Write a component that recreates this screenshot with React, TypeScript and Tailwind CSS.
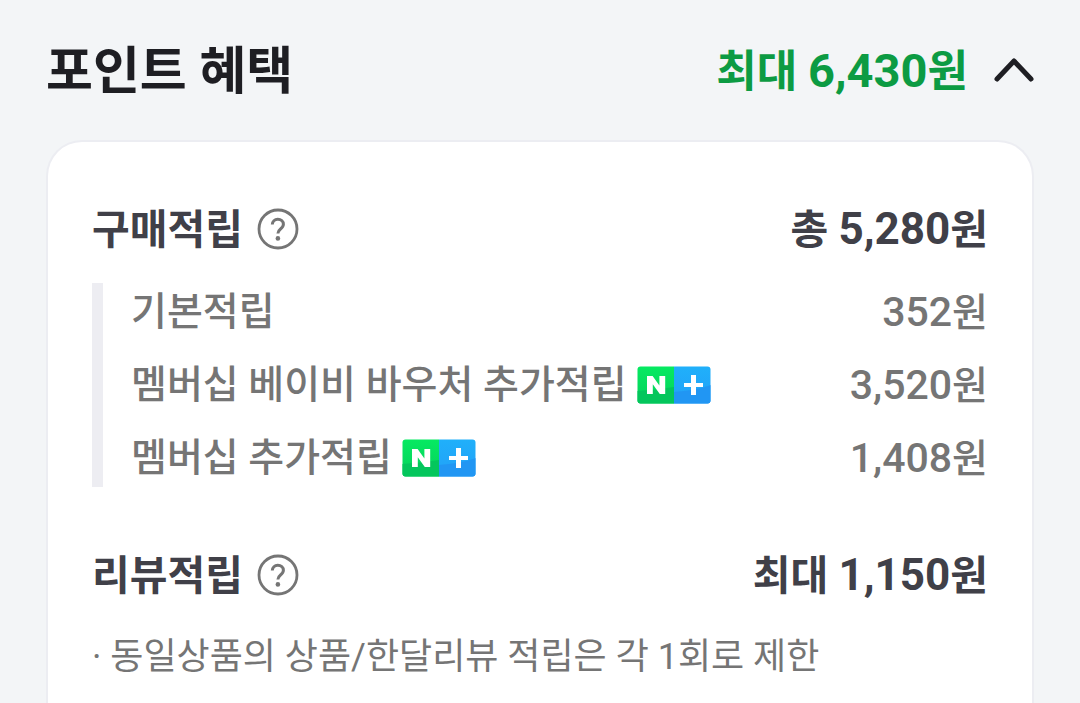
import React, { useState } from "react";

type Benefit = {
	title: string;
	value: string;
	membership?: boolean;
};

const benefits: Benefit[] = [
	{ title: "기본적립", value: "352" },
	{ title: "멤버십 베이비 바우처 추가적립", value: "3,520", membership: true },
	{ title: "멤버십 추가적립", value: "1,408", membership: true },
];

const HelpButton: React.FC<{ label: string }> = ({ label }) => (
	<button type="button" aria-label={label} className="text-[#757575]">
		<svg width="42" height="42" viewBox="0 0 42 42" fill="none">
			<circle cx="21" cy="21" r="19" stroke="currentColor" strokeWidth="2.8" />
			<path
				d="M15.3 16.6c0-3.2 2.4-5.3 5.5-5.3 3.2 0 5.6 2 5.6 5 0 2.2-1.2 3.4-2.9 4.7-1.8 1.4-2.6 2.2-2.6 4.6"
				stroke="currentColor"
				strokeWidth="3"
			/>
			<circle cx="20.9" cy="30.4" r="2.3" fill="currentColor" />
		</svg>
	</button>
);

const MembershipBadge: React.FC = () => (
	<svg width="74" height="38" viewBox="0 0 74 38" role="img">
		<defs>
			<clipPath id="badge">
				<rect x="0.5" y="0.5" width="73" height="37" rx="3" />
			</clipPath>
			<linearGradient id="badge-green" x1="0" y1="0" x2="0" y2="1">
				<stop offset="0" stopColor="#06ea61" />
				<stop offset="1" stopColor="#05d05c" />
			</linearGradient>
			<linearGradient id="badge-blue" x1="0" y1="0" x2="0" y2="1">
				<stop offset="0" stopColor="#20b0fa" />
				<stop offset="1" stopColor="#22a0f8" />
			</linearGradient>
		</defs>
		<g clipPath="url(#badge)">
			<rect width="37" height="38" fill="url(#badge-green)" />
			<rect x="37" width="37" height="38" fill="url(#badge-blue)" />
			<path d="M0 25c12-1 25-2 37-4v17H0z" fill="#04c65c" />
			<path d="M37 26c13-1 26-3 37-7v19H37z" fill="#2196f3" />
		</g>
		<path d="M10 10h5.600l6.800 9.600V10h5.800v18h-5.400l-7-9.800V28H10z" fill="#fff" />
		<path d="M54 9h5v8h7v4h-7v8h-5v-8h-7v-4h7z" fill="#fff" />
	</svg>
);

const App: React.FC = () => {
	const [open, setOpen] = useState<boolean>(true);

	return (
		<main className="flex min-h-screen flex-col bg-[#f3f5f7] px-[46px] font-[Roboto,'Noto_Sans_CJK_KR',sans-serif]">
			<header className="flex h-[140px] items-center justify-between">
				<h1 className="pt-1 text-[51px] leading-[60px] font-bold text-[#1e1e23]">
					포인트 혜택
				</h1>
				<div className="flex items-center gap-[26px]">
					<strong className="pt-0.5 text-[44px] leading-[60px] font-bold text-[#0c9b43]">
						최대 <span className="text-[47px]">6,430</span>원
					</strong>
					<button
						type="button"
						aria-label="포인트 혜택"
						aria-expanded={open}
						onClick={() => setOpen(!open)}
						className="text-[#1e1e23]"
					>
						<svg width="40" height="28" viewBox="0 0 40 28" fill="none">
							<path
								d="M3 23 20 5l17 18"
								stroke="currentColor"
								strokeWidth="5"
								strokeLinecap="round"
								strokeLinejoin="round"
							/>
						</svg>
					</button>
				</div>
			</header>

			{open && (
				<div className="grow rounded-t-[36px] border-2 border-b-0 border-[#ecedf2] bg-white px-11 pt-[57px]">
					<section>
						<div className="flex h-[60px] items-center justify-between text-[41px] text-[#404048]">
							<div className="flex items-center gap-[14px]">
								<h2 className="pt-1 font-bold">구매적립</h2>
								<HelpButton label="구매적립 안내" />
							</div>
							<strong className="font-bold">
								총 <span className="text-[44px]">5,280</span>원
							</strong>
						</div>
						<ul className="mt-6 border-l-[11px] border-[#ededf2] pl-7 text-[39px] leading-[58px] font-medium text-[#757575]">
							{benefits.map((item) => (
								<li
									key={item.title}
									className="mb-[15px] flex h-[58px] items-center justify-between last:mb-0"
								>
									<span className="flex items-center gap-[10px]">
										{item.title}
										{item.membership && <MembershipBadge />}
									</span>
									<span>
										<span className="text-[41px]">{item.value}</span>원
									</span>
								</li>
							))}
						</ul>
					</section>

					<section className="mt-[58px]">
						<div className="flex h-[60px] items-center justify-between text-[41px] text-[#404048]">
							<div className="flex items-center gap-[14px]">
								<h2 className="pt-1 font-bold">리뷰적립</h2>
								<HelpButton label="리뷰적립 안내" />
							</div>
							<strong className="font-bold">
								최대 <span className="text-[44px]">1,150</span>원
							</strong>
						</div>
						<p className="mt-6 text-[36px] leading-[56px] text-[#757575]">
							· 동일상품의 상품/한달리뷰 적립은 각 1회로 제한
						</p>
					</section>
				</div>
			)}
		</main>
	);
};

export default App;
